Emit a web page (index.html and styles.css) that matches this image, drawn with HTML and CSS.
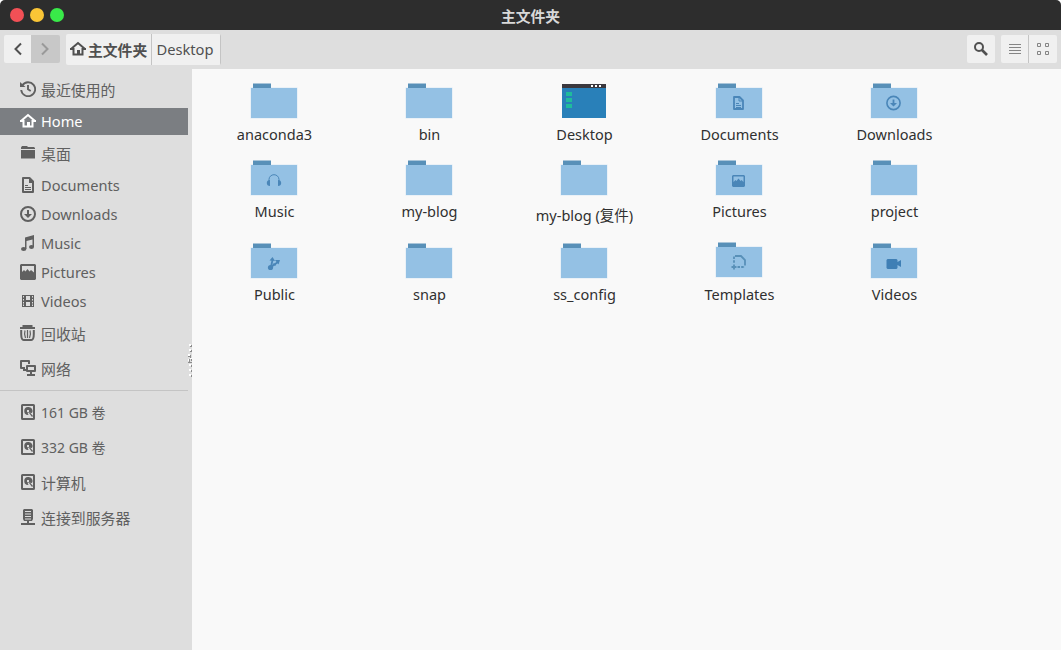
FILE: index.html
```html
<!DOCTYPE html>
<html lang="zh-CN">
<head>
<meta charset="utf-8">
<title>主文件夹</title>
<link rel="stylesheet" href="styles.css">
</head>
<body>
<svg class="sprite" aria-hidden="true">
  <symbol id="home" viewBox="0 0 16 16"><path d="M1 8 8 2l7 6M3.500 7v6.500h9V7" fill="none" stroke="currentColor" stroke-width="2"/><path d="M7 9h3v5H7zM0 7h3v2H0zM13 7h3v2h-3z" fill="currentColor"/></symbol>
  <symbol id="recent" viewBox="0 0 16 16"><path d="M2.400 4.200A7 7 0 1 1 1.200 9" fill="none" stroke="currentColor" stroke-width="1.900"/><path d="M0 1v5h5.500z" fill="currentColor"/><path d="M8 4v4.300l2.700 1.700" fill="none" stroke="currentColor" stroke-width="1.900"/></symbol>
  <symbol id="folder" viewBox="0 0 16 16"><path d="M1 4V2.500L2 1h5l1 1h6l1 1v1zM1 5h14v8.500H1z" fill="currentColor"/></symbol>
  <symbol id="doc" viewBox="0 0 16 16"><path d="M3 1h6.500L13 4.500V15H3z" fill="none" stroke="currentColor" stroke-width="2" stroke-linejoin="round"/><path d="M9 1h1l3 3.500V6H9z" fill="currentColor"/><path d="M5 8.500h3M5 10.500h6M5 12.500h6" fill="none" stroke="currentColor"/></symbol>
  <symbol id="down" viewBox="0 0 16 16"><circle cx="8" cy="8" r="7" fill="none" stroke="currentColor" stroke-width="2"/><path d="M7 4h2v4h3l-4 4-4-4h3z" fill="currentColor"/></symbol>
  <symbol id="music" viewBox="0 0 16 16"><path d="M5 2.500 14 0v12h-1.500V4.500L6.500 6v8H5z" fill="currentColor"/><ellipse cx="3.700" cy="14" rx="2.700" ry="2" fill="currentColor"/><ellipse cx="11.500" cy="12" rx="2.500" ry="2" fill="currentColor"/></symbol>
  <symbol id="picture" viewBox="0 0 16 16"><path fill-rule="evenodd" d="M1 0h14l1 1v14l-1 1H1l-1-1V1zM2 2v6l2-2 1.500 1.500L7.500 5l2 2.500L11 6l3 2.500V2z" fill="currentColor"/></symbol>
  <symbol id="film" viewBox="0 0 16 16"><path fill-rule="evenodd" d="M2 2h12v12H2zM6 3v4h4V3zM6 9v4h4V9zM3 3v1.500h1V3zM3 6v1.500h1V6zM3 9v1.500h1V9zM3 11.500V13h1v-1.500zM12 3v1.500h1V3zM12 6v1.500h1V6zM12 9v1.500h1V9zM12 11.500V13h1v-1.500z" fill="currentColor"/></symbol>
  <symbol id="trash" viewBox="0 0 16 16"><path d="M3.500 2V1h8v1M0 3h15" fill="none" stroke="currentColor" stroke-width="2"/><path d="M1.200 5v4c0 3.500.8 6 2.500 6h7.600c1.700 0 2.500-2.500 2.500-6V5" fill="none" stroke="currentColor" stroke-width="2"/><path d="M5 5.500c-.8 2.500-.3 5.500.5 7.500M7.500 5v8M10 5.500c.8 2.500.3 5.500-.5 7.500" fill="none" stroke="currentColor" stroke-width="1.200"/></symbol>
  <symbol id="network" viewBox="0 0 16 16"><path d="M5 8H1V1h8v3M3 10h3M7 6h8v5H7zM11 11v4M7 15h8" fill="none" stroke="currentColor" stroke-width="2" stroke-linejoin="round"/></symbol>
  <symbol id="disk" viewBox="0 0 16 16"><rect x="2" y="1" width="12" height="14" rx=".5" fill="none" stroke="currentColor" stroke-width="2"/><path fill-rule="evenodd" d="M8 3a4 4 0 1 0 .5 8L7.500 8.500 12 9a4 4 0 0 0-4-6zM7 6h2v2H7zM9 9l3 4 1-1-2.500-3z" fill="currentColor"/></symbol>
  <symbol id="server" viewBox="0 0 16 16"><path fill-rule="evenodd" d="M4 0h8l1 1v9l-1 2H9v2h6v2H1v-2h6v-2H4l-1-2V1zM5 2v1h6V2zM5 4.500v1h6v-1zM5 7v1h6V7zM5 9.500v1h6v-1z" fill="currentColor"/></symbol>
  <symbol id="dir" viewBox="0 0 49 37"><path d="M3 .500h18v5H3z" fill="#5890b8"/><path d="M.5 4.500h47v31H.5z" fill="#dceaf5"/><path d="M3 4h18v1H3z" fill="#5890b8"/><path d="M1 5h46v30H1z" fill="#94c1e4"/></symbol>
</svg>
<div class="window">
  <header class="titlebar">
    <div class="controls"><i class="dot close"></i><i class="dot min"></i><i class="dot max"></i></div>
    <h1 class="title">主文件夹</h1>
  </header>
  <nav class="toolbar">
    <div class="group history">
      <button class="btn back"><svg class="ico" viewBox="0 0 16 16"><path d="m11 2.500-5.500 5.500L11 13.500" fill="none" stroke="#505050" stroke-width="2"/></svg></button>
      <button class="btn forward"><svg class="ico" viewBox="0 0 16 16"><path d="m5 2.500 5.500 5.500L5 13.500" fill="none" stroke="#999" stroke-width="2"/></svg></button>
    </div>
    <div class="path">
      <button class="crumb current"><svg class="ico"><use href="#home"/></svg><span>主文件夹</span></button>
      <button class="crumb next">Desktop</button>
    </div>
    <div class="spacer"></div>
    <button class="btn search"><svg class="ico" viewBox="0 0 16 16"><circle cx="6" cy="6" r="4" fill="none" stroke="#505050" stroke-width="2"/><path d="m9 9 5 5" stroke="#505050" stroke-width="2.600"/></svg></button>
    <div class="group views">
      <button class="btn list"><svg class="ico" viewBox="0 0 16 16"><path d="M2 3.500h12M2 6.500h12M2 9.500h12M2 12.500h12" stroke="#858585"/></svg></button>
      <button class="btn grid"><svg class="ico" viewBox="0 0 16 16"><path d="M2.500 2.500h3v3h-3zM10.500 2.500h3v3h-3zM2.500 10.500h3v3h-3zM10.500 10.500h3v3h-3z" fill="none" stroke="#858585"/></svg></button>
    </div>
  </nav>
  <div class="body">
    <aside class="sidebar">
      <ul class="places">
        <li class="place cjk"><svg class="ico"><use href="#recent"/></svg><span>最近使用的</span></li>
        <li class="place active"><svg class="ico"><use href="#home"/></svg><span>Home</span></li>
        <li class="place cjk"><svg class="ico"><use href="#folder"/></svg><span>桌面</span></li>
        <li class="place"><svg class="ico"><use href="#doc"/></svg><span>Documents</span></li>
        <li class="place"><svg class="ico"><use href="#down"/></svg><span>Downloads</span></li>
        <li class="place"><svg class="ico"><use href="#music"/></svg><span>Music</span></li>
        <li class="place"><svg class="ico"><use href="#picture"/></svg><span>Pictures</span></li>
        <li class="place"><svg class="ico"><use href="#film"/></svg><span>Videos</span></li>
        <li class="place cjk"><svg class="ico"><use href="#trash"/></svg><span>回收站</span></li>
        <li class="place cjk"><svg class="ico"><use href="#network"/></svg><span>网络</span></li>
      </ul>
      <ul class="places devices">
        <li class="place cjk"><svg class="ico"><use href="#disk"/></svg><span class="volume">161 GB 卷</span></li>
        <li class="place cjk"><svg class="ico"><use href="#disk"/></svg><span class="volume">332 GB 卷</span></li>
        <li class="place cjk"><svg class="ico"><use href="#disk"/></svg><span>计算机</span></li>
        <li class="place cjk"><svg class="ico"><use href="#server"/></svg><span>连接到服务器</span></li>
      </ul>
      <svg class="grip" viewBox="0 0 4 34"><path d="M1 0h2v2H1zM1 5h2v2H1zM0 10h2v2H0zM2 14h2v1H2zM0 15h1v2H0zM1 20h2v2H1zM1 25h2v2H1zM1 30h2v2H1z" fill="#fff"/><path d="M3 1h1v1H3zM2 2h2v1H2zM3 6h1v1H3zM2 7h2v1H2zM2 11h1v3H2zM0 12h2v1H0zM3 15h1v2H3zM1 15h1v3H1zM0 18h4v1H0zM3 21h1v2H3zM3 26h1v2H3zM3 31h1v2H3z" fill="#8c8c8c"/></svg>
    </aside>
    <main class="files">
      <figure class="file"><svg class="thumb" viewBox="0 0 49 37"><use href="#dir"/></svg><figcaption>anaconda3</figcaption></figure>
      <figure class="file"><svg class="thumb" viewBox="0 0 49 37"><use href="#dir"/></svg><figcaption>bin</figcaption></figure>
      <figure class="file"><svg class="thumb" viewBox="0 0 49 37"><path d="M2 1h44v34H2z" fill="#2980b9"/><path d="M2 1h44v4H2z" fill="#3b383e"/><path d="M31 2h2v2h-2zM35 2h2v2h-2zM39 2h2v2h-2z" fill="#fff"/><path d="M6 9h6v4H6zM6 15h6v4H6zM6 21h6v4H6z" fill="#1fbc9c"/></svg><figcaption>Desktop</figcaption></figure>
      <figure class="file"><svg class="thumb" viewBox="0 0 49 37"><use href="#dir"/><path d="M19 14h5.500l3.500 3.500V26h-9z" fill="none" stroke="#4a86b8" stroke-width="1.800" stroke-linejoin="round"/><path d="M24 14v4h4M21 20.500h3M21 22.500h5M21 24.500h5" fill="none" stroke="#4a86b8"/></svg><figcaption>Documents</figcaption></figure>
      <figure class="file"><svg class="thumb" viewBox="0 0 49 37"><use href="#dir"/><circle cx="23.500" cy="20" r="6.600" fill="none" stroke="#4a86b8" stroke-width="1.600"/><path d="M22.600 16.500h1.800v3.500h2.600l-3.500 3.500-3.500-3.500h2.600z" fill="#4a86b8"/></svg><figcaption>Downloads</figcaption></figure>

      <figure class="file"><svg class="thumb" viewBox="0 0 49 37"><use href="#dir"/><path d="M19 21v-1.500a5 4.800 0 0 1 10 0V21" fill="none" stroke="#4a86b8" stroke-width="1"/><path d="M20 20v6c-2 0-3.200-1-3.200-3s1.200-3 3.200-3zM28 20v6c2 0 3.200-1 3.200-3s-1.200-3-3.200-3z" fill="#4a86b8"/></svg><figcaption>Music</figcaption></figure>
      <figure class="file"><svg class="thumb" viewBox="0 0 49 37"><use href="#dir"/></svg><figcaption>my-blog</figcaption></figure>
      <figure class="file mixed"><svg class="thumb" viewBox="0 0 49 37"><use href="#dir"/></svg><figcaption>my-blog (复件)</figcaption></figure>
      <figure class="file"><svg class="thumb" viewBox="0 0 49 37"><use href="#dir"/><path fill-rule="evenodd" d="M18 15h11l1 1v10l-1 1H18l-1-1V16zM18.500 16.500V22l2-2 1 1 2-2.500 2 2.500 1-1 2 2v-5.500z" fill="#4a86b8"/></svg><figcaption>Pictures</figcaption></figure>
      <figure class="file"><svg class="thumb" viewBox="0 0 49 37"><use href="#dir"/></svg><figcaption>project</figcaption></figure>

      <figure class="file"><svg class="thumb" viewBox="0 0 49 37"><use href="#dir"/><circle cx="20.500" cy="24.500" r="2.600" fill="#4a86b8"/><path d="m21 24 1.500-7M21 24l7-5" fill="none" stroke="#4a86b8" stroke-width="1.800"/><path d="m19.500 17.500 3-3.500 2.500 4zM25 17h5l-1.500 4.500zM23 20.500h3v2h-3z" fill="#4a86b8"/></svg><figcaption>Public</figcaption></figure>
      <figure class="file"><svg class="thumb" viewBox="0 0 49 37"><use href="#dir"/></svg><figcaption>snap</figcaption></figure>
      <figure class="file"><svg class="thumb" viewBox="0 0 49 37"><use href="#dir"/></svg><figcaption>ss_config</figcaption></figure>
      <figure class="file templates"><svg class="thumb" viewBox="0 0 49 37"><use href="#dir"/><path d="M20 14h6l4 4v5.500" fill="none" stroke="#5890b8" stroke-width="1.800"/><path d="M19 14.500V22M22.500 25H30" fill="none" stroke="#5890b8" stroke-width="1.800" stroke-dasharray="2.500 1.200"/><path d="M19 22.500v5M16.500 25h5" fill="none" stroke="#5890b8" stroke-width="1.800"/></svg><figcaption>Templates</figcaption></figure>
      <figure class="file"><svg class="thumb" viewBox="0 0 49 37"><use href="#dir"/><path d="M17.500 16h9l1 1v2l3.500-2v7l-3.500-2v3l-1 1h-9l-1-1v-8z" fill="#3f7fb5"/></svg><figcaption>Videos</figcaption></figure>
    </main>
  </div>
</div>
</body>
</html>
```
FILE: styles.css
```css
* { box-sizing: border-box; }
body {
  margin: 0;
  background: #fff;
  color: #303030;
  font: 14.5px/20px "Noto Sans", "Noto Sans CJK SC", sans-serif;
}
.sprite { display: none; }
.window {
  display: flex;
  flex-direction: column;
  height: 650px;
  overflow: hidden;
  border-radius: 5px 5px 0 0;
  background: #dedede;
}
.titlebar {
  display: grid;
  grid-template-columns: 100px 1fr 100px;
  align-items: center;
  height: 30px;
  background: #2d2d2d;
}
.controls { display: flex; gap: 6px; padding-left: 10px; }
.dot { width: 14px; height: 14px; border-radius: 50%; }
.close { background: #f25056; }
.min { background: #fac536; }
.max { background: #39ea49; }
.title {
  margin: 1px 0 0;
  color: #d8d8d8;
  font: bold 14.8px/20px "Noto Sans CJK SC", sans-serif;
  text-align: center;
}
.toolbar {
  display: flex;
  align-items: flex-start;
  height: 39px;
  padding: 4px 4px 0;
}
.group { display: flex; margin-top: 1px; overflow: hidden; border-radius: 2px; }
button {
  display: flex;
  align-items: center;
  justify-content: center;
  padding: 0;
  border: 0;
  background: #f0f0f0;
  color: #505050;
  font: inherit;
}
.ico { display: block; flex: none; width: 16px; height: 16px; }
.btn { width: 28px; height: 28px; }
.back { width: 27px; padding-left: 1px; }
.forward { width: 29px; padding-right: 1px; background: #c8c8c8; }
.path { display: flex; height: 31px; margin-left: 6px; overflow: hidden; border-radius: 2px; }
.crumb { width: 69px; border-right: 1px solid #c4c4c4; }
.next { padding: 0 2px 2px 0; font-size: 14.7px; }
.current {
  justify-content: flex-start;
  width: 86px;
  padding-left: 4px;
  gap: 2px;
  font: bold 14.8px/20px "Noto Sans CJK SC", sans-serif;
}
.current .ico { margin-top: -1px; }
.spacer { flex: 1; }
.search { margin-top: 1px; border-radius: 2px; }
.views { margin-left: 6px; }
.list { border-right: 1px solid #c4c4c4; }
.body { display: flex; flex: 1; }
.sidebar { position: relative; width: 192px; padding-top: 3px; }
.places { width: 188px; margin: 0; padding: 0; list-style: none; }
.place {
  display: flex;
  align-items: center;
  gap: 5px;
  height: 29px;
  padding: 0 0 1px 20px;
  color: #606060;
  font-size: 14.6px;
}
.place.cjk { height: 35px; padding-bottom: 0; font: 14.9px/20px "Noto Sans CJK SC", sans-serif; }
.place.cjk .ico { margin-top: -1px; }
.place.cjk .volume { padding-top: 1px; font: 14px/20px "Noto Sans", "Noto Sans CJK SC", sans-serif; }
.place.active { height: 27px; margin: 1px 0; background: #7b7e82; color: #fff; }
.devices { margin-top: 4px; padding-top: 4px; border-top: 1px solid #c4c4c4; }
.grip { position: absolute; top: 275px; left: 188px; width: 4px; height: 34px; }
.files {
  display: grid;
  flex: 1;
  grid-template-columns: repeat(5, 155px);
  grid-template-rows: 77px 83px 77px;
  align-content: start;
  padding: 14px 0 0 5px;
  background: #f9f9f9;
}
.file { display: flex; flex-direction: column; align-items: center; margin: 0; }
.thumb { display: block; width: 49px; height: 37px; }
.file figcaption { margin-top: 4px; white-space: nowrap; }
.mixed figcaption { margin-top: 8px; }
.templates .thumb { margin-top: -1px; margin-bottom: 1px; }
```
